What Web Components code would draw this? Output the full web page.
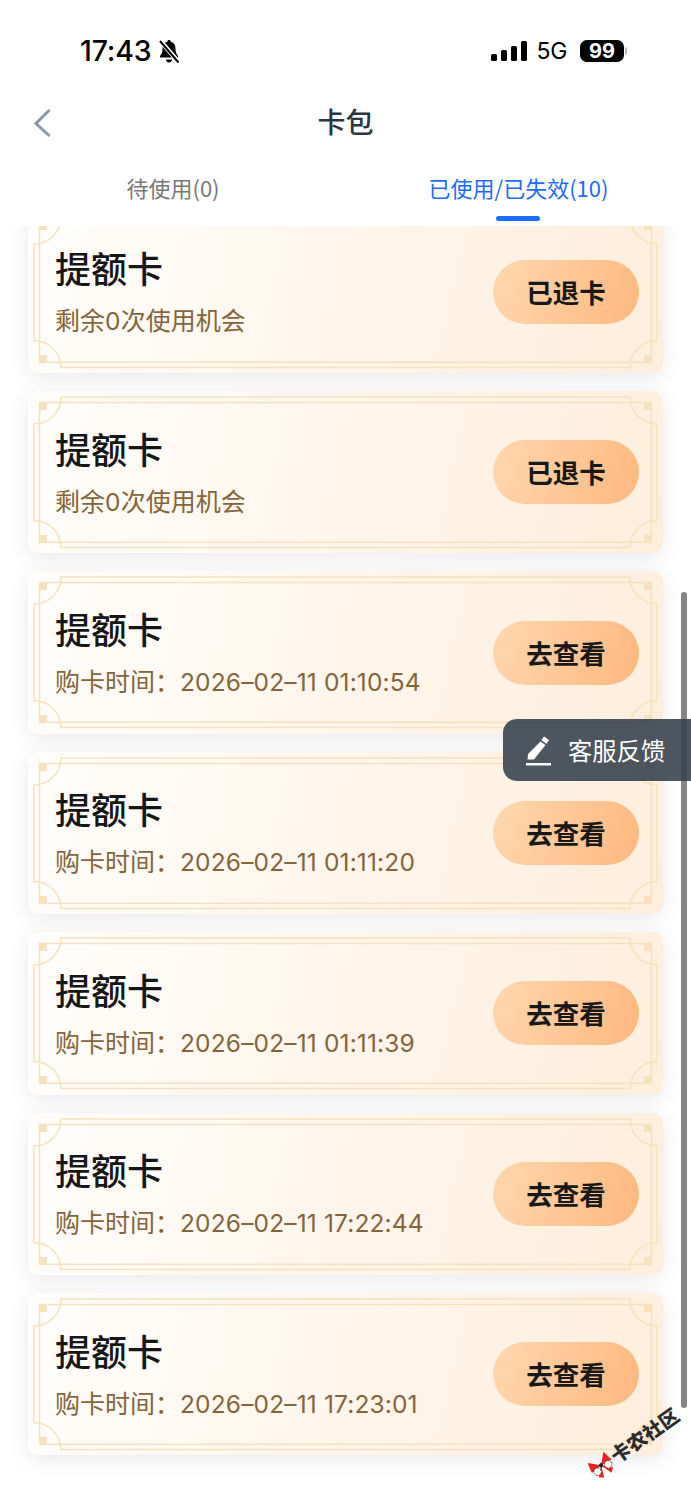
<!DOCTYPE html>
<html lang="zh"><head><meta charset="utf-8"><title>卡包</title>
<style>
html,body{margin:0;padding:0;background:#fff}
body{width:691px;height:1500px;overflow:hidden;position:relative;font-family:"Noto Sans CJK SC","Noto Sans",sans-serif}
</style></head><body>
<status-bar></status-bar>
<nav-bar>卡包</nav-bar>
<tab-bar></tab-bar>
<card-list>
<wallet-card sub="剩余0次使用机会" action="已退卡"></wallet-card>
<wallet-card sub="剩余0次使用机会" action="已退卡"></wallet-card>
<wallet-card sub="购卡时间：2026–02–11 01:10:54" action="去查看"></wallet-card>
<wallet-card sub="购卡时间：2026–02–11 01:11:20" action="去查看"></wallet-card>
<wallet-card sub="购卡时间：2026–02–11 01:11:39" action="去查看"></wallet-card>
<wallet-card sub="购卡时间：2026–02–11 17:22:44" action="去查看"></wallet-card>
<wallet-card sub="购卡时间：2026–02–11 17:23:01" action="去查看"></wallet-card>
</card-list>
<page-scrollbar></page-scrollbar>
<feedback-button></feedback-button>
<site-watermark></site-watermark>
<script>
function def(name,html){
  customElements.define(name,class extends HTMLElement{
    connectedCallback(){
      if(this.shadowRoot)return;
      const r=this.attachShadow({mode:'open'});
      r.innerHTML=typeof html==='function'?html(this):html;
    }
  });
}
def('status-bar',`<style>
:host{display:flex;align-items:center;justify-content:space-between;height:100px;padding:2px 64px 0 80px;box-sizing:border-box;color:#000;font-family:Inter,"Liberation Sans",sans-serif}
.l,.r{display:flex;align-items:center}
.t{font-size:28.500px;font-weight:500;letter-spacing:-.2px;line-height:1}
.l svg{margin-left:6px}
.r svg{margin-left:-2px}
.g{font-size:23px;font-weight:400;margin:0 13px 0 9px;letter-spacing:-.3px;line-height:1}
.b{width:44px;height:22px;background:#000;color:#fff;border-radius:7px;font-size:20px;font-weight:700;display:flex;align-items:center;justify-content:center;line-height:1}
.n{width:2px;height:8px;background:#bbb;border-radius:0 2px 2px 0;margin-left:1px}
</style>
<div class="l"><span class="t">17:43</span>
<svg width="24" height="26" viewBox="0 0 24 26"><path d="M12 2c1 0 1.700.7 1.700 1.700 3.400.8 4.800 3.700 4.800 7 0 3 .6 5 2.500 7.300v1.500H3V18c1.900-2.300 2.500-4.300 2.500-7.300 0-3.300 1.400-6.200 4.800-7C10.300 2.700 11 2 12 2z" fill="#000"/><path d="M9 21.500h6c0 1.700-1.300 3-3 3s-3-1.300-3-3z" fill="#000"/><path d="M3.500 3l18 21" stroke="#fff" stroke-width="4.500"/><path d="M3 3l18.500 21.500" stroke="#000" stroke-width="2"/></svg></div>
<div class="r">
<svg width="36" height="20" viewBox="0 0 36 20"><rect x="0" y="13" width="6" height="7" rx="1.500"/><rect x="10" y="9" width="6" height="11" rx="1.500"/><rect x="20" y="5" width="6" height="15" rx="1.500"/><rect x="30" y="0" width="6" height="20" rx="1.500"/></svg>
<span class="g">5G</span><span class="b">99</span><span class="n"></span></div>`);
def('nav-bar',`<style>
:host{display:flex;align-items:center;justify-content:center;height:42px;padding-bottom:4px;box-sizing:content-box;position:relative;font-size:28px;font-weight:500;color:#2b3640;line-height:1}
svg{position:absolute;left:33px;top:8px}
</style><svg width="20" height="30" viewBox="0 0 20 30" fill="none"><path d="M16.500 2L3 15.500 16.500 28" stroke="#8f98a6" stroke-width="3"/></svg><slot></slot>`);
def('tab-bar',`<style>
:host{display:grid;grid-template-columns:346px 345px;height:80px;box-sizing:border-box;background:#fff;position:relative;z-index:2;font-size:22px;color:#777;line-height:1}
div{display:flex;flex-direction:column;align-items:center;padding-top:28px;box-sizing:border-box}
span{display:block;line-height:26px}
.a{color:#1a6dff}
i{display:block;width:44px;height:5px;border-radius:3px;background:#1a6dff;margin-top:16px;position:relative;left:-1px}
</style><div><span>待使用(0)</span></div><div class="a"><span>已使用/已失效(10)</span><i></i></div>`);
def('card-list',`<style>
:host{display:flex;flex-direction:column;gap:18px;height:1274px;overflow:hidden;padding:0 28px;box-sizing:border-box}
::slotted(:first-child){margin-top:-15.400px}
</style><slot></slot>`);
def('wallet-card',h=>`<style>
:host{display:flex;flex:none;align-items:center;justify-content:space-between;height:162.400px;box-sizing:border-box;padding:0 24px 0 27px;border-radius:10px;position:relative;background:linear-gradient(103deg,#fefdfb 0%,#fff5ea 55%,#ffeedc 100%);box-shadow:0 4px 20px rgba(80,80,100,.13)}
svg.f{position:absolute;left:0;top:0}
.x{display:flex;flex-direction:column;position:relative;top:-1.500px}
h2{margin:0;font-size:36px;font-weight:500;line-height:46px;color:#161616}
p{margin:0;margin-top:12px;font-size:25px;line-height:34px;color:#846539;white-space:nowrap;font-weight:400}
p span{font:400 24.500px Inter,sans-serif;letter-spacing:.15px}
button{all:unset;position:relative;width:146px;height:64px;border-radius:32px;background:linear-gradient(105deg,#ffd7b0,#ffb87e);font-size:26.500px;font-weight:600;color:#181818;text-align:center;line-height:64px;font-family:"Noto Sans CJK SC",sans-serif}
</style>
<svg class="f" width="636" height="163" viewBox="0 0 636 163" fill="none"><g stroke="#f6e3bd" stroke-width="1.500">
<path d="M33 6H602A27 27 0 0 0 629 33V129.500A27 27 0 0 0 602 156.500H33A27 27 0 0 0 6 129.500V33A27 27 0 0 0 33 6Z"/>
<rect x="11.500" y="11.500" width="612" height="139.800"/></g>
<g fill="#f6e3bd"><rect x="11" y="11" width="8" height="8"/><rect x="616" y="11" width="8" height="8"/><rect x="11" y="144" width="8" height="8"/><rect x="616" y="144" width="8" height="8"/></g></svg>
<div class="x"><h2>提额卡</h2><p>${h.getAttribute('sub').replace(/[0-9:– ]+/g,m=>'<span>'+m+'</span>')}</p></div><button>${h.getAttribute('action')}</button>`);
def('page-scrollbar',`<style>
:host{display:block;position:absolute;left:681px;top:592px;width:6px;height:816px;background:#858585;border-radius:3px;z-index:3}
</style>`);
def('feedback-button',`<style>
:host{display:flex;align-items:center;position:absolute;left:503px;top:719px;width:188px;height:62px;box-sizing:border-box;padding-left:23px;gap:16px;background:rgba(58,68,80,.9);border-radius:14px 0 0 14px;color:#fff;font-size:24.300px;z-index:4;line-height:1}
</style><svg width="26" height="32" viewBox="0 0 26 32"><path d="M18 2.500l5 3.500-2.500 3.700-5-3.500z M14.500 7.500l5 3.500L8 25.500H1.500L2 20z" fill="#fff"/><rect x="0" y="29" width="25" height="2.500" fill="#fff"/></svg><span>客服反馈</span>`);
def('site-watermark',`<style>
:host{display:flex;align-items:center;gap:0;position:absolute;left:580px;top:1430px;width:max-content;white-space:nowrap;transform-origin:center;transform:rotate(-35deg);z-index:5;font-family:"Noto Sans CJK SC",sans-serif;font-weight:900;font-size:19.500px;color:#2c2c2c;line-height:1}
</style><svg width="28" height="26" viewBox="0 0 24 24"><path d="M12 12L3 3l-2 10z" fill="#e6231c"/><path d="M12 12l9-9 2 10z" fill="#e6231c"/><path d="M12 12l-4 11-4-3z M12 12l4 11 4-3z" fill="#e6231c"/><circle cx="6" cy="15" r="3.500" fill="#fff" stroke="#222" stroke-width=".8" stroke-dasharray="1.500 1"/><circle cx="18" cy="15" r="3.500" fill="#fff" stroke="#222" stroke-width=".8" stroke-dasharray="1.500 1"/><circle cx="12" cy="12" r="2" fill="#222"/></svg><span>卡农社区</span>`);
</script>
</body></html>
